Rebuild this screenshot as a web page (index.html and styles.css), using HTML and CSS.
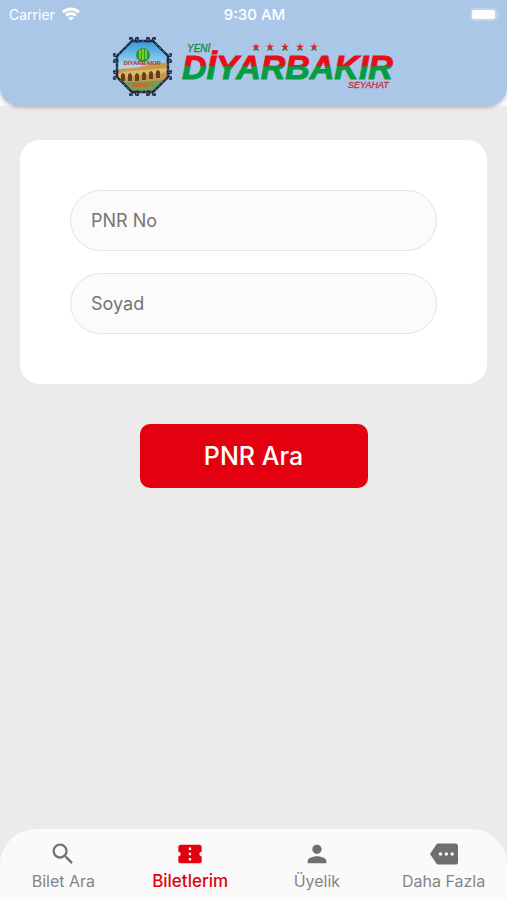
FILE: index.html
```html
<!DOCTYPE html>
<html lang="tr">
<head>
<meta charset="utf-8">
<meta name="viewport" content="width=device-width, initial-scale=1">
<title>Yeni Diyarbakır Seyahat</title>
<link rel="stylesheet" href="styles.css">
</head>
<body>
<div class="top">
  <header class="header">
    <div class="status">
      <div class="carrier">
        <span>Carrier</span>
        <svg width="18" height="14" viewBox="0 0 18 14" fill="none" stroke="#fff" stroke-width="2.8" aria-hidden="true">
          <path d="M1 5.2C5.4.9 12.6.9 17 5.2"/>
          <path d="M4 8.5c2.800-2.700 7.200-2.700 10 0"/>
          <path d="M9 13.600 6.200 10.800c1.600-1.500 4-1.500 5.600 0z" fill="#fff" stroke="none"/>
        </svg>
      </div>
      <div class="clock">9:30 AM</div>
      <svg class="battery" width="30" height="13" viewBox="0 0 30 13" aria-hidden="true">
        <rect width="27" height="13" rx="4" fill="#bcd4ee"/>
        <rect x="2" y="2" width="23" height="9" rx="2" fill="#fff"/>
        <path d="M28 4c2 .6 2 4.400 0 5z" fill="#bcd4ee"/>
      </svg>
    </div>
    <svg class="logo" width="284" height="60" viewBox="112 36 284 60" role="img" aria-label="Yeni Diyarbakır Seyahat">
      <defs>
        <linearGradient id="flag" gradientUnits="userSpaceOnUse" x1="0" y1="44" x2="0" y2="80">
          <stop offset="0" stop-color="#e90d18"/><stop offset=".61" stop-color="#e90d18"/>
          <stop offset=".63" stop-color="#079b42"/><stop offset="1" stop-color="#079b42"/>
        </linearGradient>
        <linearGradient id="sky" x1="0" y1="0" x2="0" y2="1">
          <stop offset="0" stop-color="#2e97da"/><stop offset=".5" stop-color="#a8d6ec"/>
        </linearGradient>
        <clipPath id="oct"><path d="M132 42h21l14 14v21l-14 14h-21l-14-14V56z"/></clipPath>
        <g id="knot">
          <path d="M-4-2.500-1-1.500M4-2.500 1-1.500M-4 2 -1 1M4 2 1 1M-4-3v3M4-3v3M-1.500-1v3M1.500-1v3" fill="none" stroke="#202944" stroke-width="1.500"/>
        </g>
        <path id="star" d="M0-4 1-1.200H4L1.600.6 2.500 3.500 0 1.700-2.500 3.500-1.600.6-4-1.200H-1z"/>
      </defs>
      <g clip-path="url(#oct)">
        <path d="M116 40h54v52h-54z" fill="url(#sky)"/>
        <path d="M116 70c12-3 20-1 28-4s16-4 26-3v30h-54z" fill="#c69a4c"/>
        <path d="M116 74c16-5 34-3 54-7v5c-18 3-36 2-54 7z" fill="#e0b868"/>
        <path d="M121 81v-6q2-4 4 0v6zm7 0v-6q2-4 4 0v6zm7 0v-6q2-4 4 0v6zm7-1v-6q2-4 4 0v6zm7-1v-6q2-4 4 0v6zm7-1v-6q2-4 4 0v6z" fill="#65401e"/>
        <path d="M116 84c18-4 32-1 54-5v14h-54z" fill="#789a55"/>
        <path d="M132 83h20l-6 4h-14z" fill="#c76a38"/>
        <circle cx="143" cy="55" r="7" fill="#239c35"/>
        <path d="M140 50v9M143 49v11M146 50v9" stroke="#b8dc2d" stroke-width="1.300"/>
      </g>
      <text class="seal-name" x="142" y="65" text-anchor="middle">DİYARBAKIR</text>
      <path d="M132 41h21l15 15v21l-15 15h-21l-15-15V56z" fill="none" stroke="#202944" stroke-width="2.400"/>
      <path d="M132 41h21l15 15v21l-15 15h-21l-15-15V56z" fill="none" stroke="#8095b3" stroke-width=".8" stroke-dasharray="2 3"/>
      <use href="#knot" x="134" y="40"/><use href="#knot" x="151" y="40"/>
      <use href="#knot" transform="translate(134 93) scale(1 -1)"/><use href="#knot" transform="translate(151 93) scale(1 -1)"/>
      <use href="#knot" transform="translate(116 58) rotate(-90)"/><use href="#knot" transform="translate(116 75) rotate(-90)"/>
      <use href="#knot" transform="translate(169 58) rotate(90)"/><use href="#knot" transform="translate(169 75) rotate(90)"/>
      <text class="yeni" x="187" y="52">YENİ</text>
      <text class="brand" x="182" y="79" fill="url(#flag)">DİYARBAKIR</text>
      <g fill="#dc2430">
        <use href="#star" x="256" y="47"/><use href="#star" x="270" y="47"/><use href="#star" x="285" y="47"/><use href="#star" x="300" y="47"/><use href="#star" x="314" y="47"/>
      </g>
      <path d="M253.500 50.500 256 48.700l2.500 1.800m9 0 2.500-1.800 2.500 1.800m10 0 2.500-1.800 2.500 1.800m10 0 2.500-1.800 2.500 1.800m9 0 2.500-1.800 2.500 1.800" fill="none" stroke="#26843f" stroke-width="1.200"/>
      <text class="seyahat" x="348" y="88">SEYAHAT</text>
    </svg>
  </header>
</div>

<main class="main">
  <form class="search">
    <div class="card">
      <input class="field" type="text" placeholder="PNR No" aria-label="PNR No">
      <input class="field" type="text" placeholder="Soyad" aria-label="Soyad">
    </div>
    <button class="submit" type="button">PNR Ara</button>
  </form>
</main>

<nav class="tabs">
  <a class="tab" href="#">
    <svg width="28" height="28" viewBox="0 0 24 24" aria-hidden="true"><path d="M15.500 14h-.79l-.28-.27A6.471 6.471 0 0 0 16 9.500 6.500 6.500 0 1 0 9.500 16c1.610 0 3.090-.59 4.230-1.570l.27.28v.79l5 4.990L20.490 19l-4.990-5zm-6 0C7.010 14 5 11.990 5 9.500S7.010 5 9.500 5 14 7.010 14 9.500 11.990 14 9.500 14z"/></svg>
    <span>Bilet Ara</span>
  </a>
  <a class="tab active" href="#" aria-current="page">
    <svg width="28" height="28" viewBox="0 0 24 24" aria-hidden="true"><path d="M20 12c0-1.100.9-2 2-2V6c0-1.100-.9-2-2-2H4c-1.100 0-1.990.9-1.990 2v4c1.100 0 1.990.9 1.990 2s-.89 2-2 2v4c0 1.100.9 2 2 2h16c1.100 0 2-.9 2-2v-4c-1.100 0-2-.9-2-2zm-7 5.500h-2v-2h2v2zm0-4.500h-2v-2h2v2zm0-4.500h-2v-2h2v2z"/></svg>
    <span>Biletlerim</span>
  </a>
  <a class="tab" href="#">
    <svg width="28" height="28" viewBox="0 0 24 24" aria-hidden="true"><path d="M12 12c2.210 0 4-1.790 4-4s-1.790-4-4-4-4 1.790-4 4 1.790 4 4 4zm0 2c-2.670 0-8 1.340-8 4v2h16v-2c0-2.660-5.330-4-8-4z"/></svg>
    <span>Üyelik</span>
  </a>
  <a class="tab" href="#">
    <svg width="28" height="28" viewBox="0 0 24 24" aria-hidden="true"><path d="M22 3H7c-.69 0-1.230.35-1.590.88L0 12l5.410 8.110c.36.53.97.89 1.660.89H22c1.100 0 2-.9 2-2V5c0-1.100-.9-2-2-2zM9 13.500a1.500 1.500 0 1 1 0-3 1.500 1.500 0 0 1 0 3zm5 0a1.500 1.500 0 1 1 0-3 1.500 1.500 0 0 1 0 3zm5 0a1.500 1.500 0 1 1 0-3 1.500 1.500 0 0 1 0 3z"/></svg>
    <span>Daha Fazla</span>
  </a>
</nav>
</body>
</html>
```

FILE: styles.css
```css
* { box-sizing: border-box; }

body {
  margin: 0;
  min-height: 100vh;
  display: flex;
  flex-direction: column;
  background: #ebebeb;
  font-family: Inter, "Liberation Sans", sans-serif;
}

.top { background: #fafafa; }

.header {
  display: flex;
  flex-direction: column;
  align-items: center;
  padding-bottom: 10px;
  background: #aac7e7;
  border-radius: 0 0 20px 20px;
  box-shadow: 0 1px 4px rgba(0, 0, 0, 0.3);
}

.status {
  align-self: stretch;
  display: grid;
  grid-template-columns: 1fr auto 1fr;
  align-items: center;
  height: 28px;
  padding: 0 7px 0 9px;
  color: #fff;
  font-size: 14px;
}

.carrier { display: flex; align-items: center; gap: 7px; }
.clock { font-size: 15px; font-weight: 500; }
.battery { justify-self: end; }

.logo { margin-top: 8px; }
.brand { font: italic 700 34px "Liberation Sans", sans-serif; stroke: url(#flag); stroke-width: 1px; }
.yeni { font: italic 400 10px "Liberation Sans", sans-serif; fill: #168a43; stroke: #168a43; stroke-width: 0.3px; }
.seyahat { font: italic 400 9px "Liberation Sans", sans-serif; fill: #cf2733; stroke: #cf2733; stroke-width: 0.3px; }
.seal-name { font: italic 700 6px "Liberation Sans", sans-serif; fill: #c51f35; }

.main { flex: 1; padding: 34px 20px; }

.search { display: flex; flex-direction: column; align-items: center; gap: 40px; }

.card {
  align-self: stretch;
  display: flex;
  flex-direction: column;
  gap: 22px;
  padding: 50px;
  background: #fff;
  border-radius: 20px;
}

.field {
  width: 100%;
  height: 61px;
  padding: 0 20px;
  border: 1px solid #e3e3e3;
  border-radius: 31px;
  background: #fbfbfb;
  color: #444;
  font: 18px Inter, "Liberation Sans", sans-serif;
}

.field::placeholder { color: #757575; opacity: 1; }

.submit {
  width: 228px;
  height: 64px;
  border: 0;
  border-radius: 10px;
  background: #e3000f;
  color: #fff;
  font: 500 25px Inter, "Liberation Sans", sans-serif;
}

.tabs {
  display: grid;
  grid-template-columns: repeat(4, 1fr);
  height: 71px;
  padding-top: 11px;
  background: #fafafa;
  border-radius: 36px 36px 0 0;
}

.tab {
  display: flex;
  flex-direction: column;
  align-items: center;
  gap: 3px;
  color: #858585;
  font-size: 16px;
  line-height: 20px;
  text-decoration: none;
}

.tab svg { fill: #707070; }
.active { color: #e3000f; font-size: 17px; font-weight: 500; }
.active svg { fill: #e3000f; }
```
